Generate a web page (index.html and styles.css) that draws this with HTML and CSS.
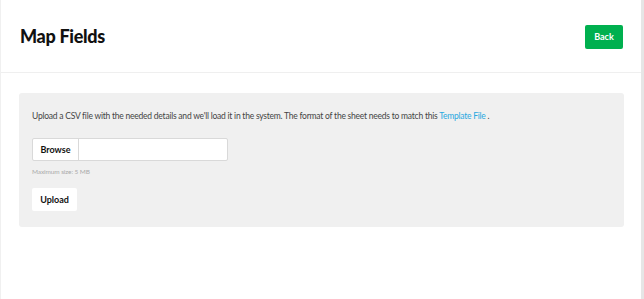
FILE: index.html
```html
<!DOCTYPE html>
<html>
<head>
<meta charset="utf-8">
<link rel="stylesheet" href="styles.css">
</head>
<body>
<div class="page">
  <header class="header">
    <h1 class="title">Map Fields</h1>
    <button class="btn-back">Back</button>
  </header>
  <main class="main">
    <section class="panel">
      <p class="intro">Upload a CSV file with the needed details and we'll load it in the system. The format of the sheet needs to match this <a class="link" href="#">Template File</a> .</p>
      <div class="file-input">
        <span class="browse">Browse</span>
        <span class="file-name"></span>
      </div>
      <div class="hint">Maximum size: 5 MB</div>
      <button class="btn-upload">Upload</button>
    </section>
  </main>
</div>
</body>
</html>
```
FILE: styles.css
```css
* { box-sizing: border-box; }
html, body { margin: 0; padding: 0; background: #fff; }
body { font-family: "Lato", "Noto Sans", sans-serif; color: #333; }
.page {
  width: 644px;
  height: 299px;
  border-left: 1px solid #f0f0f0;
  border-right: 3px solid #e6e6e6;
}
.header {
  height: 73px;
  display: flex;
  align-items: center;
  justify-content: space-between;
  padding: 0 18px 1px 19px;
  border-bottom: 1px solid #efefef;
}
.title {
  margin: 0;
  font-size: 18px;
  font-weight: 900;
  color: #111;
  letter-spacing: -0.3px;
}
.btn-back {
  width: 38px;
  height: 24px;
  border: none;
  border-radius: 2px;
  background: #00b04f;
  color: #fff;
  font-family: inherit;
  font-size: 9px;
  font-weight: 700;
  padding: 0;
  margin-top: 2px;
}
.main { padding: 20px 17px 0 18px; }
.panel {
  background: #f0f0f0;
  border-radius: 3px;
  height: 134px;
  padding: 17px 13px 0 13px;
}
.intro {
  margin: 0;
  font-size: 8.5px;
  letter-spacing: -0.23px;
  line-height: 12px;
  color: #444;
}
.link { color: #29a8e0; text-decoration: none; }
.file-input {
  margin-top: 16px;
  width: 196px;
  height: 23px;
  display: flex;
  background: #fff;
  border: 1px solid #d9d9d9;
  border-radius: 2px;
}
.browse {
  width: 46px;
  border-right: 1px solid #d9d9d9;
  display: flex;
  align-items: center;
  justify-content: center;
  font-size: 9px;
  font-weight: 700;
  color: #111;
}
.file-name { flex: 1; }
.hint {
  margin-top: 7px;
  font-size: 6.5px;
  letter-spacing: -0.1px;
  color: #aaa;
}
.btn-upload {
  display: block;
  margin-top: 13px;
  width: 45px;
  height: 23px;
  border: none;
  border-radius: 2px;
  background: #fff;
  font-family: inherit;
  font-size: 9px;
  font-weight: 700;
  color: #111;
  padding: 0;
}
```
